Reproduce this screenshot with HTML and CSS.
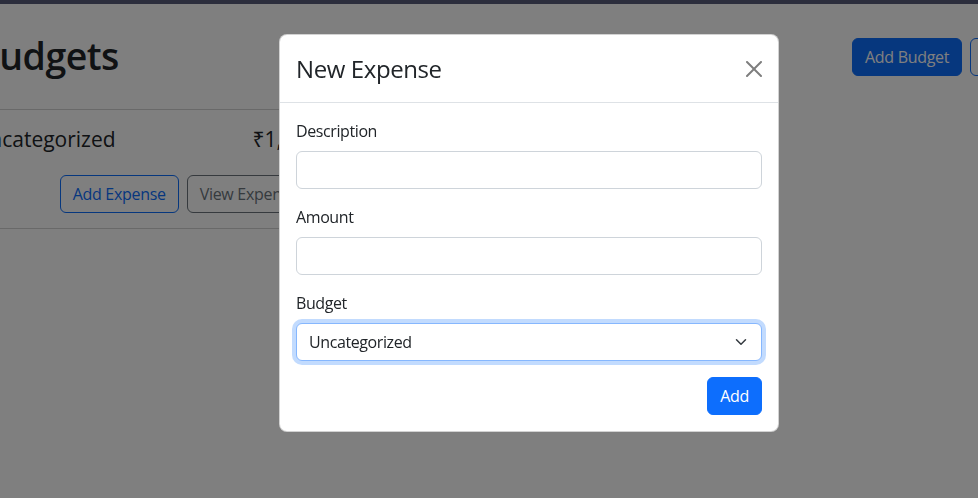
FILE: index.html
```html
<!DOCTYPE html>
<html lang="en">
<head>
<meta charset="utf-8">
<title>Budgets</title>
<link rel="stylesheet" href="styles.css">
</head>
<body>
<div class="topbar"></div>
<main class="page">
  <div class="page-head">
    <h1 class="page-title">Budgets</h1>
    <div class="actions">
      <button class="btn btn-primary">Add Budget</button>
      <button class="btn btn-outline-primary">Add Expense</button>
    </div>
  </div>
  <div class="grid">
    <div class="card">
      <div class="card-body">
        <div class="card-title">
          <span>Uncategorized</span>
          <span class="amount">₹1,000</span>
        </div>
        <div class="card-actions">
          <button class="btn btn-outline-primary">Add Expense</button>
          <button class="btn btn-outline-secondary">View Expenses</button>
        </div>
      </div>
    </div>
  </div>
</main>

<div class="backdrop"></div>

<div class="modal">
  <div class="modal-header">
    <div class="modal-title">New Expense</div>
    <button class="btn-close" aria-label="Close">
      <svg viewBox="0 0 16 16" width="16" height="16"><path fill="#000" d="M.293.293a1 1 0 0 1 1.414 0L8 6.586 14.293.293a1 1 0 1 1 1.414 1.414L9.414 8l6.293 6.293a1 1 0 0 1-1.414 1.414L8 9.414l-6.293 6.293a1 1 0 0 1-1.414-1.414L6.586 8 .293 1.707a1 1 0 0 1 0-1.414z"/></svg>
    </button>
  </div>
  <div class="modal-body">
    <div class="field">
      <label class="form-label">Description</label>
      <div class="form-control"></div>
    </div>
    <div class="field">
      <label class="form-label">Amount</label>
      <div class="form-control"></div>
    </div>
    <div class="field">
      <label class="form-label">Budget</label>
      <div class="form-select">
        <span>Uncategorized</span>
        <svg class="chevron" viewBox="0 0 16 16" width="12" height="12"><path fill="none" stroke="#343a40" stroke-linecap="round" stroke-linejoin="round" stroke-width="2" d="m2 5 6 6 6-6"/></svg>
      </div>
    </div>
    <div class="submit-row">
      <button class="btn btn-primary">Add</button>
    </div>
  </div>
</div>
</body>
</html>
```

FILE: styles.css
```css
* { box-sizing: border-box; }

html, body {
  margin: 0;
  padding: 0;
  height: 100%;
  overflow: hidden;
}

body {
  background: #fff;
  color: #212529;
  font-family: "Open Sans", "Noto Sans", sans-serif;
  font-size: 16px;
  line-height: 1.5;
}

.topbar {
  height: 4px;
  background: #585c7a;
}

.page {
  margin-left: -30px;
  width: 1100px;
}

.page-head {
  display: grid;
  grid-template-columns: 882px auto;
  align-items: start;
  margin-top: 29px;
}

.page-title {
  margin: 0 0 0 5px;
  font-size: 37.5px;
  font-weight: 600;
  line-height: 45px;
  letter-spacing: -0.5px;
}

.actions {
  display: flex;
  gap: 8px;
  margin-top: 5px;
}

.btn {
  display: inline-block;
  font-family: inherit;
  font-size: 16px;
  line-height: 1.5;
  letter-spacing: -0.3px;
  padding: 6px 12px;
  border: 1px solid transparent;
  border-radius: 6px;
  background: transparent;
  color: #212529;
  white-space: nowrap;
}

.btn-primary {
  background: #0d6efd;
  border-color: #0d6efd;
  color: #fff;
}

.btn-outline-primary {
  border-color: #0d6efd;
  color: #0d6efd;
}

.btn-outline-secondary {
  border-color: #6c757d;
  color: #6c757d;
}

.grid {
  margin-top: 31px;
  margin-left: -13px;
  display: grid;
  grid-template-columns: 378px;
}

.card {
  border: 1px solid rgba(0, 0, 0, 0.175);
  border-radius: 6px;
  background: #fff;
}

.card-body {
  padding: 16px 16px 15px;
}

.card-title {
  display: flex;
  justify-content: space-between;
  align-items: baseline;
  font-size: 21px;
  line-height: 27px;
  margin-bottom: 22px;
}

.card-actions {
  display: flex;
  justify-content: flex-end;
  gap: 8px;
}

.backdrop {
  position: fixed;
  inset: 0;
  background: #000;
  opacity: 0.5;
}

.modal {
  position: absolute;
  left: 279px;
  top: 34px;
  width: 500px;
  background: #fff;
  border: 1px solid rgba(0, 0, 0, 0.175);
  border-radius: 8px;
}

.modal-header {
  display: flex;
  align-items: center;
  padding: 16px;
  border-bottom: 1px solid #dee2e6;
}

.modal-title {
  font-size: 24px;
  font-weight: 500;
  line-height: 35px;
  letter-spacing: -0.4px;
}

.btn-close {
  display: flex;
  width: 24px;
  height: 24px;
  padding: 4px;
  margin: -8px -4px -8px auto;
  border: 0;
  background: transparent;
  opacity: 0.5;
}

.modal-body {
  padding: 16px;
  letter-spacing: -0.4px;
}

.field {
  margin-bottom: 16px;
}

.form-label {
  display: block;
  margin-bottom: 8px;
}

.form-control {
  height: 38px;
  border: 1px solid #ced4da;
  border-radius: 6px;
  background: #fff;
}

.form-select {
  display: flex;
  align-items: center;
  justify-content: space-between;
  height: 38px;
  padding: 6px 12px;
  border: 1px solid #86b7fe;
  border-radius: 6px;
  background: #fff;
  box-shadow: 0 0 0 4px rgba(13, 110, 253, 0.25);
}

.chevron {
  margin-right: 2px;
}

.submit-row {
  display: flex;
  justify-content: flex-end;
}
```
